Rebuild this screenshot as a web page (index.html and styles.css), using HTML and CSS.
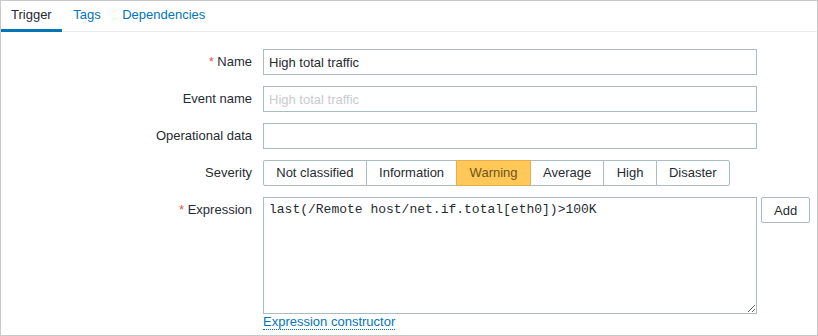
FILE: index.html
```html
<!DOCTYPE html>
<html lang="en">
<head>
    <meta charset="UTF-8">
    <title>Trigger</title>
    <link rel="stylesheet" href="styles.css">
</head>
<body>
    <div class="trigger-box">
        <ul class="tabs">
            <li class="tab active">Trigger</li>
            <li class="tab">Tags</li>
            <li class="tab">Dependencies</li>
        </ul>

        <form class="form-grid">
            <label class="form-label"><span class="req">*</span> Name</label>
            <input class="text-input" type="text" value="High total traffic">
            <div></div>

            <label class="form-label">Event name</label>
            <input class="text-input" type="text" placeholder="High total traffic">
            <div></div>

            <label class="form-label">Operational data</label>
            <input class="text-input" type="text">
            <div></div>

            <label class="form-label">Severity</label>
            <div class="severity">
                <span class="sev-btn">Not classified</span>
                <span class="sev-btn">Information</span>
                <span class="sev-btn checked">Warning</span>
                <span class="sev-btn">Average</span>
                <span class="sev-btn">High</span>
                <span class="sev-btn">Disaster</span>
            </div>
            <div></div>

            <label class="form-label"><span class="req">*</span> Expression</label>
            <div class="expr-cell">
                <textarea class="expr-input">last(/Remote host/net.if.total[eth0])&gt;100K</textarea>
                <a class="link" href="#">Expression constructor</a>
            </div>
            <div><button type="button" class="btn">Add</button></div>
        </form>
    </div>
</body>
</html>
```

FILE: styles.css
```css
body {
    margin: 0;
    font-family: "Liberation Sans", Arial, sans-serif;
    font-size: 13px;
    color: #1f2c33;
}

.trigger-box {
    width: 818px;
    height: 336px;
    box-sizing: border-box;
    border: 1px solid #c9c9c9;
    background: white;
    overflow: hidden;
}

.tabs {
    display: flex;
    gap: 1.5px;
    margin: 0;
    padding: 0;
    list-style: none;
    border-bottom: 1px solid #ebeef0;
}

.tab {
    padding: 0 10px;
    line-height: 28px;
    border-bottom: 3px solid transparent;
    margin-bottom: -1px;
    color: #0275b8;
}

.tab.active {
    color: #1f2c33;
    border-bottom-color: #0275b8;
}

.form-grid {
    display: grid;
    grid-template-columns: 251px 494px auto;
    column-gap: 11px;
    row-gap: 11px;
    padding-top: 17px;
}

.form-label {
    text-align: right;
    line-height: 26px;
}

.req {
    color: #e45959;
}

.text-input {
    box-sizing: border-box;
    height: 26px;
    width: 100%;
    margin: 0;
    padding: 0 5px;
    border: 1px solid #acbbc2;
    font-family: inherit;
    font-size: 13px;
    color: #1f2c33;
    outline: none;
}

.text-input::placeholder {
    color: #c8cbcd;
}

.severity {
    display: flex;
}

.sev-btn {
    height: 26px;
    box-sizing: border-box;
    line-height: 24px;
    padding: 0 12.25px;
    border: 1px solid #acbbc2;
    margin-left: -1px;
    background: white;
}

.sev-btn:first-child {
    margin-left: 0;
    border-radius: 2px 0 0 2px;
}

.sev-btn:last-child {
    border-radius: 0 2px 2px 0;
}

.sev-btn.checked {
    background: #ffc859;
    border-color: #e5b04a;
    color: #6e5418;
    position: relative;
}

.expr-cell {
    display: flex;
    flex-direction: column;
    align-items: flex-start;
}

.expr-input {
    box-sizing: border-box;
    width: 494px;
    height: 117px;
    margin: 0;
    padding: 4px 5px;
    border: 1px solid #acbbc2;
    font-family: "Liberation Mono", "Courier New", monospace;
    font-size: 13px;
    color: #1f2c33;
    outline: none;
}

.link {
    color: #0275b8;
    text-decoration: none;
    line-height: 15px;
    border-bottom: 1px dotted #0275b8;
}

.btn {
    box-sizing: border-box;
    height: 26px;
    margin: 0 0 0 -7px;
    padding: 0 12px;
    border: 1px solid #acbbc2;
    border-radius: 2px;
    background: white;
    font-family: inherit;
    font-size: 13px;
    color: #1f2c33;
}
```
